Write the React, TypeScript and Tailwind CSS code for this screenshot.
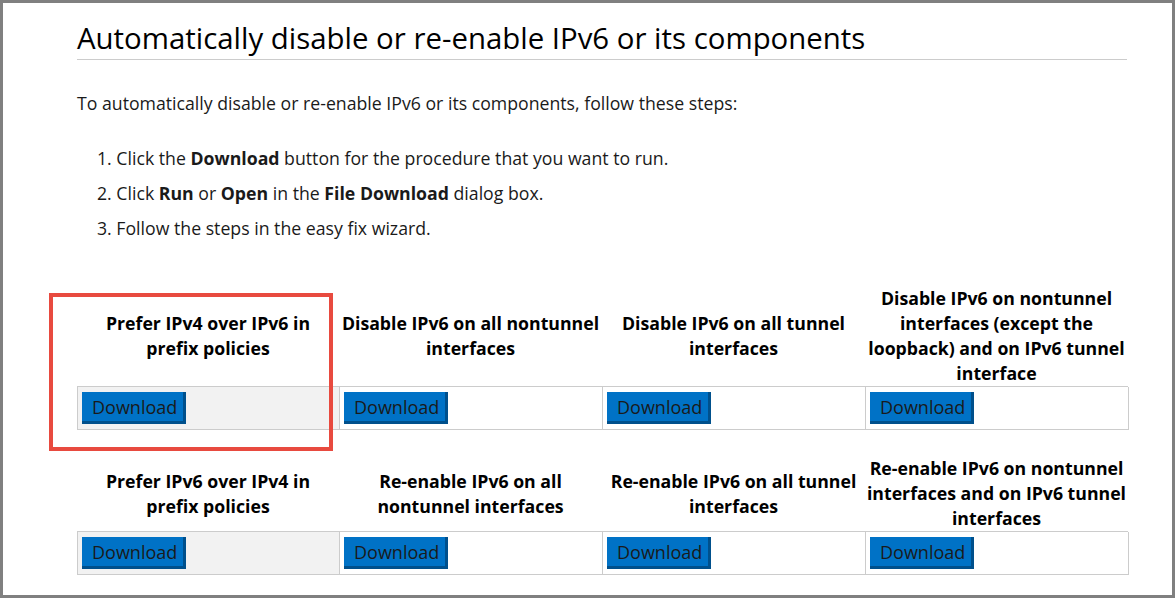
import React from 'react';

// KB article snippet: easy-fix download table for IPv6 components.

const FONT = { fontFamily: '"Open Sans", "Noto Sans", "Liberation Sans", sans-serif' };

type Fix = { lines: string[]; gray?: boolean };

const ROW_ONE: Fix[] = [
  { lines: ['Prefer IPv4 over IPv6 in', 'prefix policies'], gray: true },
  { lines: ['Disable IPv6 on all nontunnel', 'interfaces'] },
  { lines: ['Disable IPv6 on all tunnel', 'interfaces'] },
  { lines: ['Disable IPv6 on nontunnel', 'interfaces (except the', 'loopback) and on IPv6 tunnel', 'interface'] },
];

const ROW_TWO: Fix[] = [
  { lines: ['Prefer IPv6 over IPv4 in', 'prefix policies'], gray: true },
  { lines: ['Re-enable IPv6 on all', 'nontunnel interfaces'] },
  { lines: ['Re-enable IPv6 on all tunnel', 'interfaces'] },
  { lines: ['Re-enable IPv6 on nontunnel', 'interfaces and on IPv6 tunnel', 'interfaces'] },
];

const DownloadButton: React.FC = () => (
  <button className="h-[32px] w-[104px] bg-[#0072c6] border-r-[3px] border-b-[3px] border-[#00508c] text-[18px] leading-none text-[#1a1a1a] text-left pl-[10px]">
    Download
  </button>
);

const FixTable: React.FC<{ fixes: Fix[]; headHeight: string }> = ({ fixes, headHeight }) => (
  <div className="w-[1051px]">
    <div className={`grid grid-cols-[262px_263px_263px_263px] ${headHeight}`}>
      {fixes.map((f) => (
        <div key={f.lines[0]} className="flex flex-col items-center justify-center text-center text-[17.7px] leading-[25px] font-bold text-black whitespace-nowrap">
          {f.lines.map((l) => (
            <span key={l}>{l}</span>
          ))}
        </div>
      ))}
    </div>
    <div className="grid grid-cols-[262px_263px_263px_263px] border-t border-l border-[#cccccc]">
      {fixes.map((f) => (
        <div
          key={f.lines[0]}
          className={`border-r border-b border-[#cccccc] pl-[4px] pt-[5px] pb-[5px] ${f.gray ? 'bg-[#f2f2f2]' : 'bg-white'}`}
        >
          <DownloadButton />
        </div>
      ))}
    </div>
  </div>
);

export default function App() {
  return (
    <div style={FONT} className="relative h-[598px] w-[1175px] overflow-hidden border-[3px] border-[#808080] bg-white text-[#1a1a1a]">
      <div className="pl-[74px]">
        <h2 className="mt-[17px] w-[1050px] border-b border-[#cccccc] pb-[3px] text-[29.4px] leading-[36px] font-medium text-black">
          Automatically disable or re-enable IPv6 or its components
        </h2>
        <p className="mt-[31px] text-[17.7px] leading-[25px]">
          To automatically disable or re-enable IPv6 or its components, follow these steps:
        </p>
        <ol className="mt-[30px] pl-[20px] text-[17.7px] leading-[25px]">
          <li className="mb-[10px]">1. Click the <b>Download</b> button for the procedure that you want to run.</li>
          <li className="mb-[10px]">2. Click <b>Run</b> or <b>Open</b> in the <b>File Download</b> dialog box.</li>
          <li>3. Follow the steps in the easy fix wizard.</li>
        </ol>
        <div className="mt-[45px]">
          <FixTable fixes={ROW_ONE} headHeight="h-[100px]" />
        </div>
        <div className="mt-[26px]">
          <FixTable fixes={ROW_TWO} headHeight="h-[75px]" />
        </div>
      </div>
      {/* red highlight box drawn over the first cell */}
      <div className="absolute left-[46px] top-[290px] h-[158px] w-[284px] border-[4px] border-[#e84a3f]" />
    </div>
  );
}
